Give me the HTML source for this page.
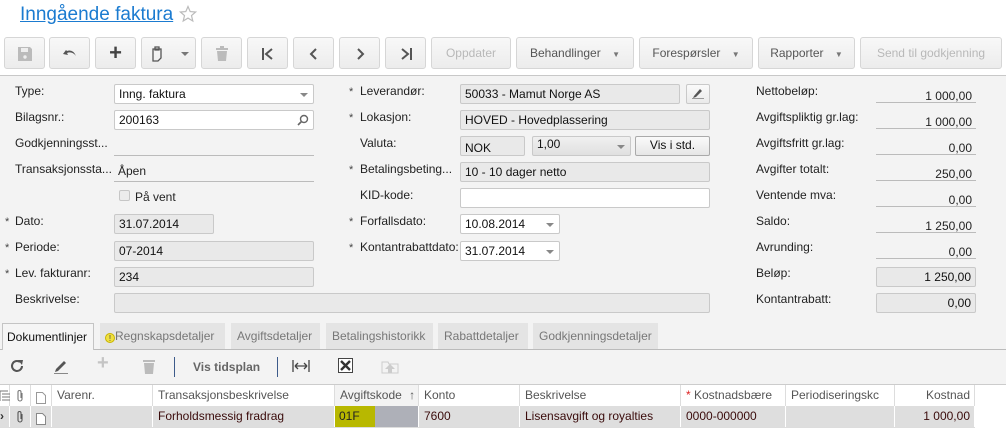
<!DOCTYPE html>
<html><head><meta charset="utf-8"><style>
*{box-sizing:border-box;margin:0;padding:0}
body{width:1006px;height:437px;overflow:hidden;background:#fff;font-family:"Liberation Sans",Arial,sans-serif;font-size:12px;color:#222;position:relative}
.a{position:absolute}
.btn{position:absolute;top:37px;height:32px;border:1px solid #d6d6d6;border-radius:3px;background:linear-gradient(#f8f8f8,#ececec);color:#555;font-size:12px;text-align:center;line-height:30px}
.dis{color:#b8b8b8}
.lbl{position:absolute;font-size:12px;color:#222}
.star{position:absolute;font-size:11px;color:#444}
.in{position:absolute;height:20px;border:1px solid #c9c9c9;border-radius:2px;background:#fff;padding:2px 4px;font-size:12px;line-height:15px;color:#111}
.ro{background:#e9e9e9}
.ul{position:absolute;height:20px;border-bottom:1px solid #bbb;font-size:12px;text-align:right;padding-right:4px;line-height:26px}
.caret{position:absolute;right:5px;top:8px;border:4px solid transparent;border-top:4px solid #888;border-bottom:0;width:0;height:0}
.tab{position:absolute;top:323px;height:26px;background:#e4e4e4;color:#777;font-size:12px;line-height:26px;padding-left:6px}
.th,.td{position:absolute;height:21px;line-height:21px;font-size:12px;padding-left:5px;border-right:1px solid #ddd}
.th{top:385px;background:#fff;color:#555}
.td{top:406px;background:#dedede;color:#3a0b0b;border-right:1px solid #fff}
.clip{position:absolute;left:6px;top:4px}
</style></head><body>
<div class="a" style="left:20px;top:4px;font-size:19px;color:#1b7bd0;text-decoration:underline">Inngående faktura</div>
<svg class="a" style="left:179px;top:5px" width="18" height="18" viewBox="0 0 18 18"><path d="M9 1.5 L11.2 6.6 L16.6 7 L12.5 10.6 L13.8 16 L9 13.1 L4.2 16 L5.5 10.6 L1.4 7 L6.8 6.6Z" fill="none" stroke="#bbb" stroke-width="1.2"/></svg>

<div class="btn" style="left:4px;width:41px"><svg width="16" height="16" viewBox="0 0 16 16" style="margin-top:8px"><path d="M1 1h12l2 2v12H1z" fill="#bbb"/><rect x="4" y="2" width="7" height="4" fill="#eee"/><circle cx="8" cy="11" r="1.7" fill="#eee"/></svg></div>
<div class="btn" style="left:49px;width:41px"><svg width="16" height="14" viewBox="0 0 16 14" style="margin-top:9px"><path d="M4 3 L1 7 L6 8 L5 6 Q10 4 14 9 Q11 2 5 4Z" fill="#555"/></svg></div>
<div class="btn" style="left:95px;width:41px;font-size:22px;color:#444;font-weight:bold">+</div>
<div class="btn" style="left:141px;width:55px"><svg width="40" height="16" viewBox="0 0 40 16" style="margin-top:8px"><path d="M4 3h8v9l-3 3H4z M6 1h4v3H6z" fill="none" stroke="#555" stroke-width="1.3"/><path d="M32 6h8l-4 4z" fill="#777"/></svg></div>
<div class="btn" style="left:201px;width:41px"><svg width="14" height="16" viewBox="0 0 14 16" style="margin-top:8px"><rect x="1" y="2" width="12" height="2" fill="#bbb"/><rect x="5" y="0" width="4" height="2" fill="#bbb"/><path d="M2 5h10l-1 10H3z" fill="#bbb"/></svg></div>
<div class="btn" style="left:247px;width:41px"><svg width="14" height="14" viewBox="0 0 14 14" style="margin-top:9px"><path d="M2 1v12 M11 2 L5 7 L11 12" fill="none" stroke="#555" stroke-width="2"/></svg></div>
<div class="btn" style="left:293px;width:41px"><svg width="14" height="14" viewBox="0 0 14 14" style="margin-top:9px"><path d="M9 2 L4 7 L9 12" fill="none" stroke="#555" stroke-width="2"/></svg></div>
<div class="btn" style="left:339px;width:41px"><svg width="14" height="14" viewBox="0 0 14 14" style="margin-top:9px"><path d="M5 2 L10 7 L5 12" fill="none" stroke="#555" stroke-width="2"/></svg></div>
<div class="btn" style="left:385px;width:41px"><svg width="14" height="14" viewBox="0 0 14 14" style="margin-top:9px"><path d="M12 1v12 M3 2 L9 7 L3 12" fill="none" stroke="#555" stroke-width="2"/></svg></div>
<div class="btn dis" style="left:431px;width:80px">Oppdater</div>
<div class="btn" style="left:516px;width:118px">Behandlinger <span style="font-size:8px;color:#777;margin-left:8px">▼</span></div>
<div class="btn" style="left:639px;width:114px">Forespørsler <span style="font-size:8px;color:#777;margin-left:8px">▼</span></div>
<div class="btn" style="left:758px;width:97px">Rapporter <span style="font-size:8px;color:#777;margin-left:8px">▼</span></div>
<div class="btn dis" style="left:860px;width:142px">Send til godkjenning</div>

<div class="a" style="left:0;top:75px;width:1006px;height:310px;background:#f3f3f3;border-top:1px solid #c8c8c8"></div>

<div class="lbl" style="left:15px;top:84px">Type:</div>
<div class="in" style="left:114px;top:84px;width:200px">Inng. faktura<div class="caret"></div></div>
<div class="lbl" style="left:15px;top:110px">Bilagsnr.:</div>
<div class="in" style="left:114px;top:110px;width:200px">200163<svg class="a" style="right:4px;top:3px" width="12" height="12" viewBox="0 0 12 12"><circle cx="7" cy="5" r="3.5" fill="none" stroke="#666" stroke-width="1.4"/><path d="M4.5 7.5 L1 11" stroke="#666" stroke-width="1.6"/></svg></div>
<div class="lbl" style="left:15px;top:136px">Godkjenningsst...</div>
<div class="a" style="left:114px;top:155px;width:200px;border-top:1px solid #bbb"></div>
<div class="lbl" style="left:15px;top:162px">Transaksjonssta...</div>
<div class="lbl" style="left:118px;top:164px">Åpen</div>
<div class="a" style="left:114px;top:181px;width:200px;border-top:1px solid #bbb"></div>
<div class="a" style="left:119px;top:190px;width:11px;height:11px;border:1px solid #c6c6c6;background:#ececec;border-radius:2px"></div>
<div class="lbl" style="left:135px;top:190px">På vent</div>
<div class="star" style="left:5px;top:216px">*</div><div class="lbl" style="left:15px;top:214px">Dato:</div>
<div class="in ro" style="left:114px;top:214px;width:100px">31.07.2014</div>
<div class="star" style="left:5px;top:242px">*</div><div class="lbl" style="left:15px;top:240px">Periode:</div>
<div class="in ro" style="left:114px;top:241px;width:200px">07-2014</div>
<div class="star" style="left:5px;top:268px">*</div><div class="lbl" style="left:15px;top:266px">Lev. fakturanr:</div>
<div class="in ro" style="left:114px;top:267px;width:200px">234</div>
<div class="lbl" style="left:15px;top:292px">Beskrivelse:</div>
<div class="in ro" style="left:114px;top:293px;width:596px"></div>

<div class="star" style="left:349px;top:86px">*</div><div class="lbl" style="left:360px;top:84px">Leverandør:</div>
<div class="in ro" style="left:460px;top:84px;width:220px">50033 - Mamut Norge AS</div>
<div class="in" style="left:686px;top:84px;width:24px;background:linear-gradient(#fafafa,#eaeaea)"><svg width="14" height="12" viewBox="0 0 14 12"><path d="M3 9 L9 2 L11 4 L5 10 L2 11Z" fill="#555"/><path d="M1 11.5h12" stroke="#999"/></svg></div>
<div class="star" style="left:349px;top:112px">*</div><div class="lbl" style="left:360px;top:110px">Lokasjon:</div>
<div class="in ro" style="left:460px;top:110px;width:250px">HOVED - Hovedplassering</div>
<div class="lbl" style="left:360px;top:136px">Valuta:</div>
<div class="in ro" style="left:460px;top:136px;width:65px;padding-top:4px">NOK</div>
<div class="in" style="left:532px;top:136px;width:99px;background:linear-gradient(#f0f0f0,#e0e0e0);padding-top:0">1,00<div class="caret"></div></div>
<div class="in" style="left:635px;top:136px;width:75px;background:linear-gradient(#fafafa,#e6e6e6);text-align:center;padding-top:1px;border-color:#aaa">Vis i std.</div>
<div class="star" style="left:349px;top:164px">*</div><div class="lbl" style="left:360px;top:162px">Betalingsbeting...</div>
<div class="in ro" style="left:460px;top:162px;width:250px">10 - 10 dager netto</div>
<div class="lbl" style="left:360px;top:188px">KID-kode:</div>
<div class="in" style="left:460px;top:188px;width:250px"></div>
<div class="star" style="left:349px;top:216px">*</div><div class="lbl" style="left:360px;top:214px">Forfallsdato:</div>
<div class="in" style="left:460px;top:214px;width:100px">10.08.2014<div class="caret"></div></div>
<div class="star" style="left:349px;top:242px">*</div><div class="lbl" style="left:360px;top:240px">Kontantrabattdato:</div>
<div class="in" style="left:460px;top:241px;width:100px">31.07.2014<div class="caret"></div></div>

<div class="lbl" style="left:756px;top:84px">Nettobeløp:</div><div class="ul" style="left:876px;top:83px;width:100px">1 000,00</div>
<div class="lbl" style="left:756px;top:110px">Avgiftspliktig gr.lag:</div><div class="ul" style="left:876px;top:109px;width:100px">1 000,00</div>
<div class="lbl" style="left:756px;top:136px">Avgiftsfritt gr.lag:</div><div class="ul" style="left:876px;top:135px;width:100px">0,00</div>
<div class="lbl" style="left:756px;top:162px">Avgifter totalt:</div><div class="ul" style="left:876px;top:161px;width:100px">250,00</div>
<div class="lbl" style="left:756px;top:188px">Ventende mva:</div><div class="ul" style="left:876px;top:187px;width:100px">0,00</div>
<div class="lbl" style="left:756px;top:214px">Saldo:</div><div class="ul" style="left:876px;top:213px;width:100px">1 250,00</div>
<div class="lbl" style="left:756px;top:240px">Avrunding:</div><div class="ul" style="left:876px;top:239px;width:100px">0,00</div>
<div class="lbl" style="left:756px;top:266px">Beløp:</div><div class="in ro" style="left:876px;top:267px;width:100px;text-align:right">1 250,00</div>
<div class="lbl" style="left:756px;top:292px">Kontantrabatt:</div><div class="in ro" style="left:876px;top:293px;width:100px;text-align:right">0,00</div>

<div class="a" style="left:0;top:349px;width:1006px;border-top:1px solid #bbb"></div>
<div class="tab" style="left:2px;width:92px;background:#f5f5f5;border:1px solid #c4c4c4;border-bottom:none;color:#111;height:27px;padding-left:4px">Dokumentlinjer</div>
<div class="tab" style="left:100px;width:125px;padding-left:5px"><span style="display:inline-block;width:10px;height:10px;border-radius:50%;background:#f0e040;border:1px solid #c8b400;font-size:8px;line-height:9px;text-align:center;color:#444;vertical-align:-1px">!</span>Regnskapsdetaljer</div>
<div class="tab" style="left:231px;width:89px">Avgiftsdetaljer</div>
<div class="tab" style="left:326px;width:107px">Betalingshistorikk</div>
<div class="tab" style="left:438px;width:90px">Rabattdetaljer</div>
<div class="tab" style="left:533px;width:125px">Godkjenningsdetaljer</div>

<svg class="a" style="left:10px;top:359px" width="14" height="14" viewBox="0 0 14 14"><path d="M12 7 A5 5 0 1 1 10 3" fill="none" stroke="#555" stroke-width="2"/><path d="M8 1 L13 1 L12 6Z" fill="#555"/></svg>
<svg class="a" style="left:53px;top:358px" width="16" height="16" viewBox="0 0 16 16"><path d="M3 11 L11 3 L13 5 L5 13 L2 14Z" fill="#555"/><path d="M1 15.5h14" stroke="#888"/></svg>
<div class="a" style="left:97px;top:352px;font-size:20px;color:#c4c4c4;font-weight:bold">+</div>
<svg class="a" style="left:142px;top:359px" width="14" height="16" viewBox="0 0 14 16"><rect x="1" y="1" width="12" height="2" fill="#bbb"/><path d="M2 4h10l-1 11H3z" fill="#bbb"/></svg>
<div class="a" style="left:174px;top:357px;height:20px;border-left:1px solid #3c5a8a"></div>
<div class="a" style="left:193px;top:360px;font-size:12px;font-weight:bold;color:#666">Vis tidsplan</div>
<div class="a" style="left:277px;top:357px;height:20px;border-left:1px solid #3c5a8a"></div>
<svg class="a" style="left:292px;top:360px" width="18" height="12" viewBox="0 0 18 12"><path d="M1 0v12 M17 0v12 M3 6h12 M3 6l3-3 M3 6l3 3 M15 6l-3-3 M15 6l-3 3" stroke="#444" stroke-width="1.3" fill="none"/></svg>
<svg class="a" style="left:338px;top:358px" width="15" height="15" viewBox="0 0 15 15"><rect x="0.5" y="0.5" width="14" height="14" fill="#fff" stroke="#444"/><path d="M3 3 L12 12 M12 3 L3 12" stroke="#333" stroke-width="2.4"/></svg>
<svg class="a" style="left:381px;top:358px" width="18" height="16" viewBox="0 0 18 16"><path d="M1 4h6l1 2h9v9H1z" fill="none" stroke="#ccc"/><path d="M9 6 L14 11 H11 V15 H7 V11 H4Z" fill="#ccc"/></svg>

<div class="a" style="left:0;top:384px;width:1006px;border-top:1px solid #ccc"></div>
<div class="a" style="left:975px;top:385px;width:31px;height:52px;background:#fff"></div>
<div class="th" style="left:0;width:10px;padding:0"><svg width="10" height="21" viewBox="0 0 10 21"><path d="M0 6h8 M2 9h8 M2 12h8 M2 15h8 M0 6v10" stroke="#777" fill="none"/></svg></div>
<div class="th" style="left:10px;width:21px;padding:0"><svg class="clip" width="9" height="14" viewBox="0 0 9 14"><path d="M6 4v6a2 2 0 0 1-4 0V3a1.5 1.5 0 0 1 3 0v6" fill="none" stroke="#777" stroke-width="1.1"/></svg></div>
<div class="th" style="left:31px;width:21px;padding:5px 0 0 5px"><svg width="10" height="12"><path d="M0.5 0.5h6l3 3v8h-9z" fill="#fff" stroke="#999"/></svg></div>
<div class="th" style="left:52px;width:101px">Varenr.</div>
<div class="th" style="left:153px;width:182px">Transaksjonsbeskrivelse</div>
<div class="th" style="left:335px;width:84px;background:#f3f3f3">Avgiftskode <span style="margin-left:4px">↑</span></div>
<div class="th" style="left:419px;width:101px">Konto</div>
<div class="th" style="left:520px;width:161px">Beskrivelse</div>
<div class="th" style="left:681px;width:105px"><span style="color:#d22">*</span> Kostnadsbære</div>
<div class="th" style="left:786px;width:109px;overflow:hidden;white-space:nowrap">Periodiseringskc</div>
<div class="th" style="left:895px;width:80px;text-align:right;padding-right:4px">Kostnad</div>

<div class="td" style="left:0;width:10px;padding:0;color:#333;font-weight:bold">›</div>
<div class="td" style="left:10px;width:21px;padding:0"><svg class="clip" width="9" height="14" viewBox="0 0 9 14"><path d="M6 4v6a2 2 0 0 1-4 0V3a1.5 1.5 0 0 1 3 0v6" fill="none" stroke="#555" stroke-width="1.1"/></svg></div>
<div class="td" style="left:31px;width:21px;padding:5px 0 0 5px"><svg width="10" height="12"><path d="M0.5 0.5h6l3 3v8h-9z" fill="#fff" stroke="#888"/></svg></div>
<div class="td" style="left:52px;width:101px"></div>
<div class="td" style="left:153px;width:182px">Forholdsmessig fradrag</div>
<div class="td" style="left:335px;width:84px;background:#aeb0b8;padding:0"><span style="display:inline-block;background:#b8b800;height:21px;width:40px;padding-left:4px;color:#222">01F</span></div>
<div class="td" style="left:419px;width:101px">7600</div>
<div class="td" style="left:520px;width:161px">Lisensavgift og royalties</div>
<div class="td" style="left:681px;width:105px">0000-000000</div>
<div class="td" style="left:786px;width:109px"></div>
<div class="td" style="left:895px;width:80px;text-align:right;padding-right:4px">1 000,00</div>
<div class="a" style="left:0;top:427px;width:975px;border-top:1px solid #ddd"></div>
</body></html>
